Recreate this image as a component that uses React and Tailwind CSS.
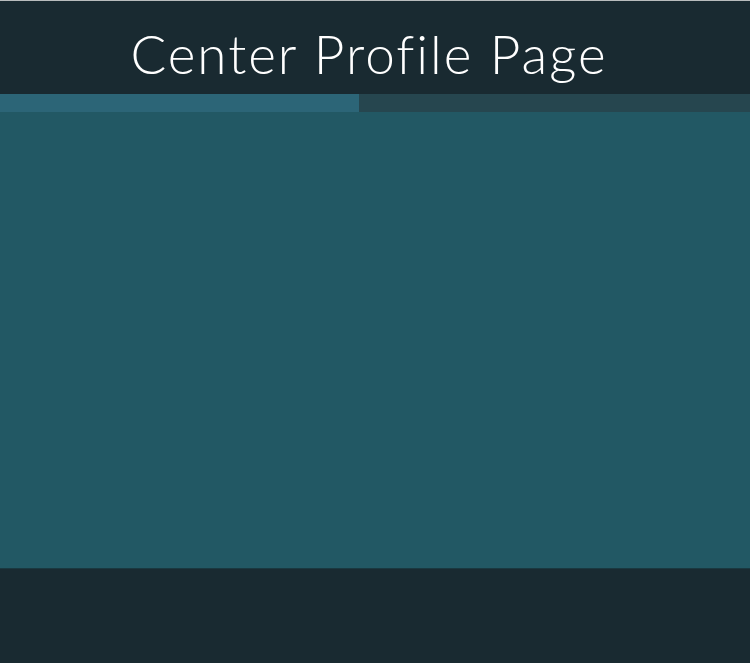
export default function App() {
  return (
    <div className="w-[750px] h-[663px] flex flex-col bg-[#192a31]" style={{ fontFamily: "Lato, 'Open Sans', sans-serif" }}>
      <div className="h-px bg-[#b9bcbd]" />
      <header className="h-[93px] bg-[#192a31] flex items-start justify-center pr-[12px]">
        <h1 className="text-white text-[53px] font-light leading-none mt-[26px] tracking-[2px]">Center Profile Page</h1>
      </header>
      <div className="h-[18px] flex">
        <div className="w-[359px] bg-[#2c6577]" />
        <div className="flex-1 bg-[#26464f]" />
      </div>
      <main className="h-[456px] bg-[#225864]" />
      <div className="h-px bg-[#1a3840]" />
      <footer className="flex-1 bg-[#192a31]" />
    </div>
  );
}
